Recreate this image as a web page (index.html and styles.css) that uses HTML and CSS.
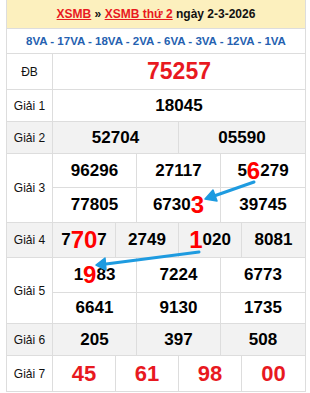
FILE: index.html
```html
<!DOCTYPE html>
<html lang="vi">
<head>
<meta charset="utf-8">
<link rel="stylesheet" href="styles.css">
</head>
<body>
<div class="board">
  <div class="title">
    <a class="lnk">XSMB</a> » <a class="lnk">XSMB thứ 2</a> ngày 2-3-2026
  </div>
  <div class="codes">8VA - 17VA - 18VA - 2VA - 6VA - 3VA - 12VA - 1VA</div>

  <div class="row h-db">
    <div class="label">ĐB</div>
    <div class="cells c1"><div class="cell db">75257</div></div>
  </div>
  <div class="row h-g1">
    <div class="label">Giải 1</div>
    <div class="cells c1"><div class="cell">18045</div></div>
  </div>
  <div class="row h-g2 gray">
    <div class="label">Giải 2</div>
    <div class="cells c2"><div class="cell">52704</div><div class="cell">05590</div></div>
  </div>
  <div class="row">
    <div class="label">Giải 3</div>
    <div class="cells c3 two">
      <div class="cell">96296</div><div class="cell">27117</div><div class="cell">5<span class="hl">6</span>279</div>
      <div class="cell">77805</div><div class="cell">6730<span class="hl">3</span></div><div class="cell">39745</div>
    </div>
  </div>
  <div class="row h-g4 gray">
    <div class="label">Giải 4</div>
    <div class="cells c4">
      <div class="cell">7<span class="hl">70</span>7</div><div class="cell">2749</div><div class="cell"><span class="hl">1</span>020</div><div class="cell">8081</div>
    </div>
  </div>
  <div class="row">
    <div class="label">Giải 5</div>
    <div class="cells c3 g5">
      <div class="cell">1<span class="hl">9</span>83</div><div class="cell">7224</div><div class="cell">6773</div>
      <div class="cell">6641</div><div class="cell">9130</div><div class="cell">1735</div>
    </div>
  </div>
  <div class="row h-g6 gray">
    <div class="label">Giải 6</div>
    <div class="cells c3"><div class="cell">205</div><div class="cell">397</div><div class="cell">508</div></div>
  </div>
  <div class="row h-g7">
    <div class="label">Giải 7</div>
    <div class="cells c4 red">
      <div class="cell">45</div><div class="cell">61</div><div class="cell">98</div><div class="cell">00</div>
    </div>
  </div>

  <svg class="arrows" width="310" height="393" viewBox="0 0 310 393">
    <g stroke="#1e9be0" stroke-width="3" stroke-linecap="round" fill="#1e9be0">
      <line x1="254" y1="182" x2="214" y2="196"/>
      <polygon points="205,199 213,190 217,201" stroke-width="1.5" stroke-linejoin="round"/>
      <line x1="199" y1="252" x2="106" y2="264"/>
      <polygon points="96,265 105,258 106,270" stroke-width="1.5" stroke-linejoin="round"/>
    </g>
  </svg>
</div>
</body>
</html>
```

FILE: styles.css
```css
* { box-sizing: border-box; }
html, body { margin: 0; padding: 0; background: #fff; }
body {
  font-family: "Liberation Sans", Arial, sans-serif;
  color: #000;
  width: 310px;
  height: 393px;
  overflow: hidden;
}
.board {
  width: 300px;
  margin-left: 6px;
  border-left: 1px solid #ddd;
  border-right: 1px solid #ddd;
}
.title {
  height: 28px;
  line-height: 28px;
  background: #fcf0be;
  text-align: center;
  font-size: 12px;
  font-weight: bold;
  color: #111;
  white-space: nowrap;
}
.lnk {
  color: #e8191f;
  text-decoration: underline;
}
.codes {
  height: 26px;
  line-height: 25px;
  text-align: center;
  font-size: 11.5px;
  font-weight: bold;
  color: #2561b0;
  border-top: 1px solid #ddd;
  border-bottom: 1px solid #ddd;
  white-space: nowrap;
}
.row {
  display: flex;
  border-bottom: 1px solid #ddd;
}
.row.gray { background: #f2f2f2; }
.label {
  width: 46px;
  flex: none;
  border-right: 1px solid #ddd;
  display: flex;
  align-items: center;
  justify-content: center;
  font-size: 12px;
  color: #111;
}
.cells {
  flex: 1;
  display: grid;
}
.c1 { grid-template-columns: 1fr; }
.c2 { grid-template-columns: repeat(2, 1fr); }
.c3 { grid-template-columns: repeat(3, 1fr); }
.c4 { grid-template-columns: repeat(4, 1fr); }
.cell {
  display: flex;
  align-items: center;
  justify-content: center;
  font-size: 17px;
  font-weight: bold;
  border-right: 1px solid #ddd;
  white-space: nowrap;
}
.cell:last-child, .c3 .cell:nth-child(3n), .c4 .cell:nth-child(4n) { border-right: none; }
.two .cell { height: 34px; }
.two .cell:nth-child(-n+3) { border-bottom: 1px solid #ddd; }
.g5 .cell:nth-child(-n+3) { height: 35px; border-bottom: 1px solid #ddd; }
.g5 .cell:nth-child(n+4) { height: 30px; }
.h-db { height: 36px; }
.h-g1 { height: 32px; }
.h-g2 { height: 32px; }
.h-g4 { height: 35px; }
.h-g6 { height: 32px; }
.h-g7 { height: 36px; }
.db {
  font-size: 23px;
  color: #e8191f;
}
.red .cell {
  font-size: 22px;
  color: #e8191f;
}
.hl {
  color: #ff0000;
  font-size: 24px;
  line-height: 1;
}
.arrows {
  position: absolute;
  left: 0;
  top: 0;
  pointer-events: none;
}
```
